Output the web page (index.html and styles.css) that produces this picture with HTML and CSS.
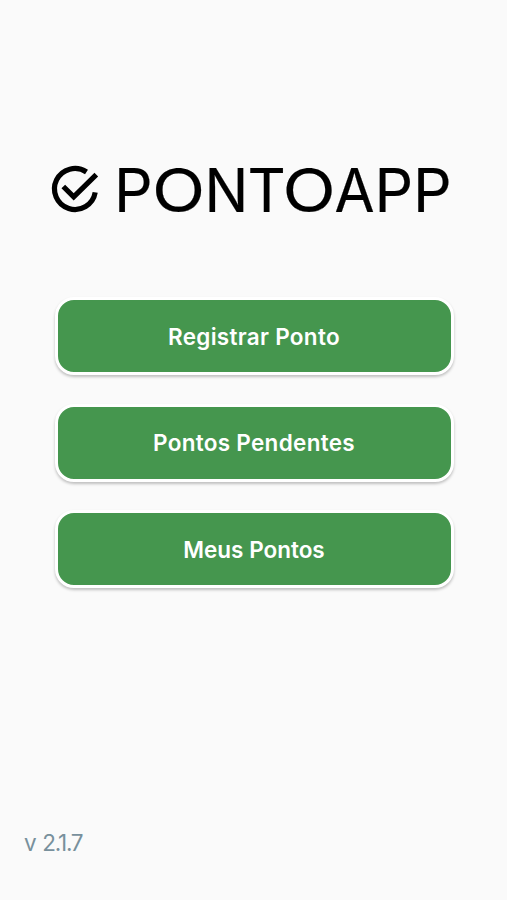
FILE: index.html
```html
<!DOCTYPE html>
<html lang="pt-BR">
<head>
    <meta charset="UTF-8">
    <meta name="viewport" content="width=device-width, initial-scale=1.0">
    <title>PontoApp</title>
    <link rel="stylesheet" href="styles.css">
</head>
<body>
    <h1 class="logo">
        <svg class="logo-svg" viewBox="0 0 400 50" width="400" height="50">
            <g class="logo-icon">
                <path d="M34.5 7 A20.5 20.5 0 1 0 43.2 27.4"></path>
                <path d="M11.3 21.5 L21.7 31.9 L44.3 9.6"></path>
            </g>
            <g class="logo-text">
                <text x="62" y="47">P</text>
                <text transform="translate(100 47) scale(1.15 1)">O</text>
                <text transform="translate(152.5 47) scale(0.96 1)">N</text>
                <text transform="translate(195.5 47) scale(0.98 1)">T</text>
                <text transform="translate(230.5 47) scale(1.15 1)">O</text>
                <text transform="translate(282.5 47) scale(0.96 1)">A</text>
                <text x="322.5" y="47">P</text>
                <text x="361" y="47">P</text>
            </g>
        </svg>
    </h1>
    <main class="menu">
        <button class="menu-button registrar">Registrar Ponto</button>
        <button class="menu-button pendentes">Pontos Pendentes</button>
        <button class="menu-button meus">Meus Pontos</button>
    </main>
    <footer class="version">v 2.1.7</footer>
</body>
</html>
```
FILE: styles.css
```css
* {
    box-sizing: border-box;
}
body {
    font-family: Inter, "Open Sans", sans-serif;
    display: flex;
    flex-direction: column;
    height: 100vh;
    background-color: #fafafa;
    margin: 0;
}
.logo {
    margin: 165px 0 0 52px;
    height: 50px;
}
.logo-svg {
    display: block;
    overflow: visible;
}
.logo-icon {
    fill: none;
    stroke: #000;
    stroke-width: 5.2;
}
.logo-text {
    font-size: 60.5px;
    font-weight: 400;
    fill: #000;
    stroke: #000;
    stroke-width: 0.2;
}
.menu {
    display: flex;
    flex-direction: column;
    gap: 28.5px;
    margin: 82px 53.5px 0 54.5px;
}
.menu-button {
    height: 78px;
    padding: 0;
    font-family: inherit;
    font-size: 22.5px;
    font-weight: 600;
    letter-spacing: 0.3px;
    color: #fff;
    background-color: #45964e;
    border: 3px solid #fff;
    border-radius: 19px;
    box-shadow: 0 2px 3px rgba(0, 0, 0, 0.24);
    cursor: pointer;
}
.meus {
    letter-spacing: 0;
}
.version {
    margin: auto 0 43px 24px;
    font-size: 22.5px;
    letter-spacing: -1.3px;
    word-spacing: 2px;
    line-height: 28px;
    color: #78909c;
}
```
